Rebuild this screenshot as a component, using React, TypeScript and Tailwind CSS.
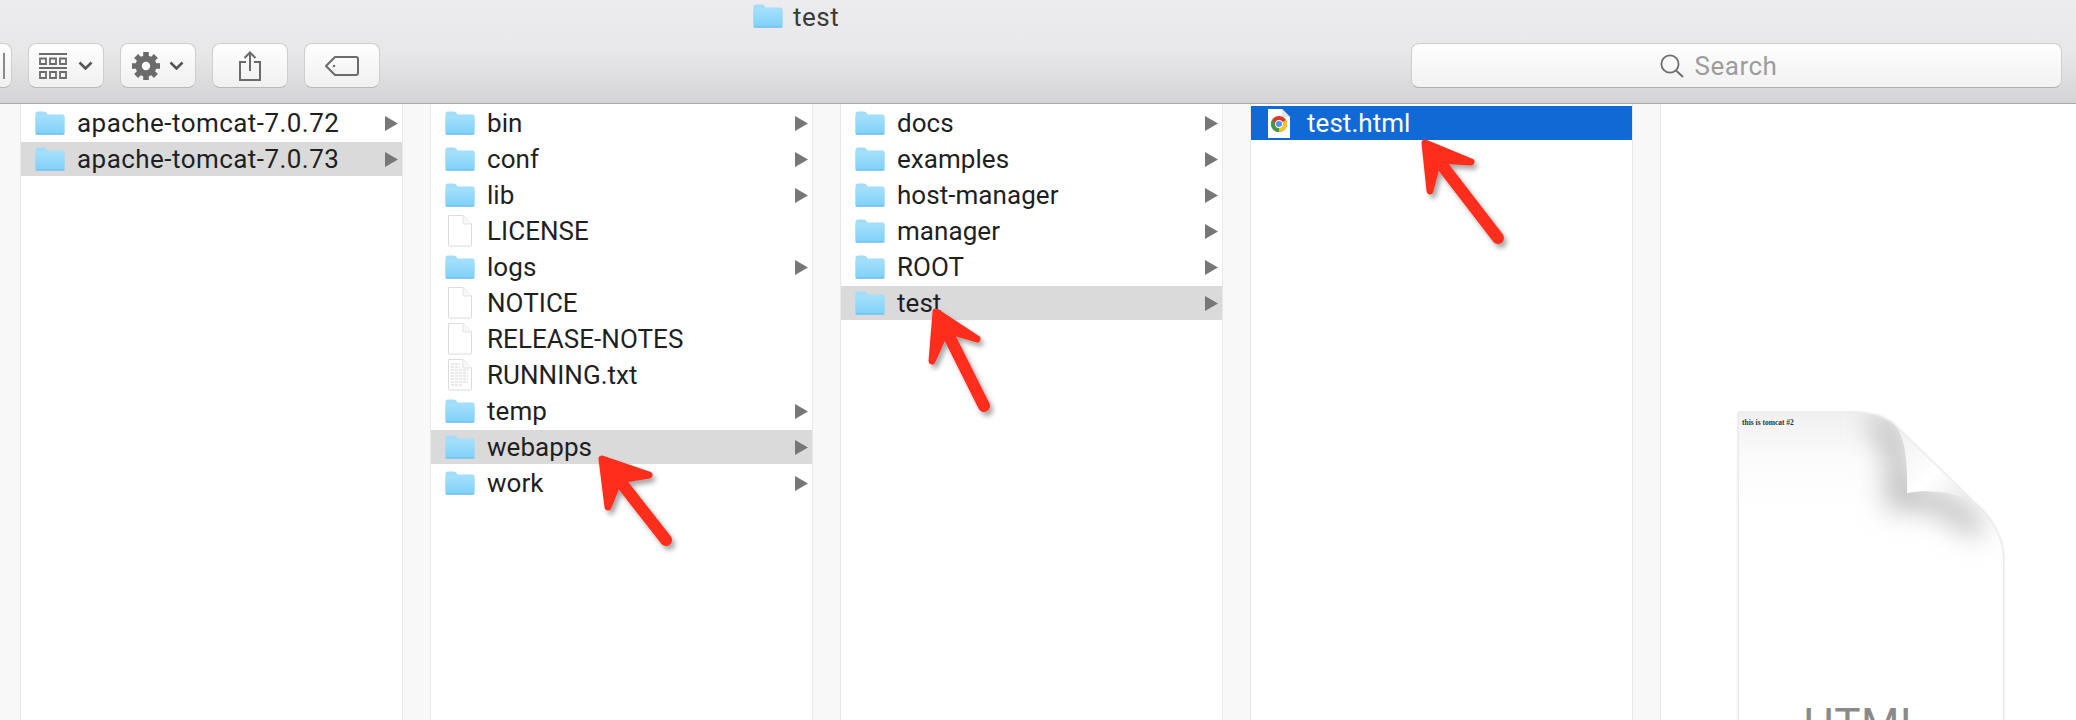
import React from 'react';

type Item = { name: string; kind: 'folder' | 'file' | 'text' | 'chrome'; state?: 'open' | 'active'; wide?: boolean };

const columns: Item[][] = [
  [
    { name: 'apache-tomcat-7.0.72', kind: 'folder', wide: true },
    { name: 'apache-tomcat-7.0.73', kind: 'folder', state: 'open', wide: true },
  ],
  [
    { name: 'bin', kind: 'folder' },
    { name: 'conf', kind: 'folder' },
    { name: 'lib', kind: 'folder' },
    { name: 'LICENSE', kind: 'file' },
    { name: 'logs', kind: 'folder' },
    { name: 'NOTICE', kind: 'file' },
    { name: 'RELEASE-NOTES', kind: 'file' },
    { name: 'RUNNING.txt', kind: 'text' },
    { name: 'temp', kind: 'folder' },
    { name: 'webapps', kind: 'folder', state: 'open' },
    { name: 'work', kind: 'folder' },
  ],
  [
    { name: 'docs', kind: 'folder' },
    { name: 'examples', kind: 'folder' },
    { name: 'host-manager', kind: 'folder' },
    { name: 'manager', kind: 'folder' },
    { name: 'ROOT', kind: 'folder' },
    { name: 'test', kind: 'folder', state: 'open' },
  ],
  [{ name: 'test.html', kind: 'chrome', state: 'active' }],
];

const FolderIcon = () => (
  <svg width="30" height="24" viewBox="0 0 30 24" className="shrink-0">
    <defs>
      <linearGradient id="folderFill" x1="0" y1="0" x2="0" y2="1">
        <stop offset="0" stopColor="#a5e0fb" />
        <stop offset="1" stopColor="#7fd0f9" />
      </linearGradient>
    </defs>
    <path d="M0.5 3 Q0.5 0.5 3 0.5 H9 Q10.5 0.5 11.5 2 L12.5 3.5 H27.5 Q29.5 3.5 29.5 5.5 V21.5 Q29.5 23.5 27.5 23.5 H2.5 Q0.5 23.5 0.5 21.5 Z" fill="#a2dcf9" />
    <path d="M0.5 6 Q0.5 4.5 2.5 4.5 H27.5 Q29.5 4.5 29.5 6 V21.5 Q29.5 23.5 27.5 23.5 H2.5 Q0.5 23.5 0.5 21.5 Z" fill="url(#folderFill)" />
    <path d="M1 23 H29" stroke="#6bb9e4" strokeWidth="1.2" strokeLinecap="round" />
  </svg>
);

const FileIcon = ({ lines }: { lines?: boolean }) => (
  <svg width="30" height="32" viewBox="0 0 30 32" className="shrink-0">
    <path d="M3.5 0.5 H18 L26.5 9 V30 Q26.5 31 25.5 31 H4.5 Q3.5 31 3.5 30 Z" fill="#fff" stroke="#dcdcdc" />
    <path d="M18 0.5 V9 H26.5" fill="#f8f8f8" stroke="#e2e2e2" />
    {lines && (
      <path
        d="M6 5 H15 M6 8 H15 M6 11 H23 M6 14 H23 M6 17 H23 M6 20 H23 M6 23 H23 M6 26 H17"
        stroke="#d4d4d4"
        strokeWidth="1.2"
        strokeDasharray="3 1"
      />
    )}
  </svg>
);

const ChromeDoc = () => (
  <svg width="30" height="30" viewBox="0 0 30 30" className="shrink-0">
    <path d="M3 1 H17 L25 9 V30 H3 Z" fill="#fff" />
    <path d="M17 1 V9 H25" fill="#e4e4e4" />
    <circle cx="14" cy="16" r="8" fill="#d8392c" />
    <path d="M14 16 L7.1 20 A8 8 0 0 0 14 24 Z" fill="#3f9b47" />
    <path d="M14 16 L14 24 A8 8 0 0 0 21 12 Z" fill="#f4c430" />
    <path d="M7.1 20 A8 8 0 0 1 7.4 11.5 L11 17.5 Z" fill="#3f9b47" />
    <circle cx="14" cy="16" r="3.9" fill="#fff" />
    <circle cx="14" cy="16" r="3" fill="#5a8ff0" />
  </svg>
);

const Row = ({ item }: { item: Item }) => {
  const rowColor =
    item.state === 'active' ? 'bg-[#1169d6] text-white' : item.state === 'open' ? 'bg-[#dadada] text-[#1f1f1f]' : 'text-[#1f1f1f]';
  return (
    <div className={`flex h-[34px] items-center pl-[14px] pr-[4px] ${rowColor}`}>
      {item.kind === 'folder' && <FolderIcon />}
      {item.kind === 'file' && <FileIcon />}
      {item.kind === 'text' && <FileIcon lines />}
      {item.kind === 'chrome' && <ChromeDoc />}
      <span className={`ml-[12px] flex-1 text-[26px] leading-[34px] ${item.wide ? 'tracking-[0.45px]' : 'tracking-[0.05px]'}`}>
        {item.name}
      </span>
      {item.kind === 'folder' && (
        <svg width="13" height="15" viewBox="0 0 13 15">
          <path d="M0 0 L13 7.5 L0 15 Z" fill="#777" />
        </svg>
      )}
    </div>
  );
};

const Gutter = ({ className }: { className: string }) => (
  <div className={`shrink-0 border-[#e8e8e8] bg-[#f8f8f8] ${className}`} />
);

const Chevron = () => (
  <svg width="15" height="9" viewBox="0 0 15 9" fill="none">
    <path d="M1.5 1.5 L7.5 7.5 L13.5 1.5" stroke="#555" strokeWidth="2.6" />
  </svg>
);

const ToolButton = ({ children, className = '' }: { children?: React.ReactNode; className?: string }) => (
  <div
    className={`flex h-[45px] w-[76px] shrink-0 items-center justify-center rounded-[8px] border border-[#cfcfcf] border-b-[#b8b8b8] bg-gradient-to-b from-[#fefefe] to-[#f0f0f0] ${className}`}
  >
    {children}
  </div>
);

const ViewIcon = () => (
  <svg width="28" height="26" viewBox="0 0 28 26" fill="none" stroke="#6b6b6b">
    <path d="M0 1 H28 M0 15 H28" strokeWidth="2" />
    <path d="M1 5.5 H7 V11 H1 Z M11 5.5 H17 V11 H11 Z M21 5.5 H27 V11 H21 Z" strokeWidth="1.8" />
    <path d="M1 19 H7 V25 H1 Z M11 19 H17 V25 H11 Z M21 19 H27 V25 H21 Z" strokeWidth="1.8" />
  </svg>
);

const GearIcon = () => (
  <svg width="28" height="28" viewBox="0 0 28 28">
    <g fill="#6b6b6b">
      <circle cx="14" cy="14" r="10.5" />
      {[0, 45, 90, 135, 180, 225, 270, 315].map((a) => (
        <rect key={a} x="11.2" y="0" width="5.6" height="6" transform={`rotate(${a} 14 14)`} />
      ))}
    </g>
    <circle cx="14" cy="14" r="4.2" fill="#f8f8f8" />
  </svg>
);

const ShareIcon = () => (
  <svg width="22" height="30" viewBox="0 0 22 30" fill="none" stroke="#6b6b6b" strokeWidth="2">
    <path d="M7 11 H1 V29 H21 V11 H15" />
    <path d="M11 20 V1.5 M5.5 7 L11 1.5 L16.5 7" />
  </svg>
);

const TagIcon = () => (
  <svg width="34" height="20" viewBox="0 0 34 20" fill="none" stroke="#6b6b6b" strokeWidth="2">
    <path d="M10 1 H31 Q33 1 33 3 V17 Q33 19 31 19 H10 L1 10 Z" strokeLinejoin="round" />
    <circle cx="9" cy="10" r="1.2" fill="#6b6b6b" stroke="none" />
  </svg>
);

const paperPath = 'M0 0 H115 C135 0 150 6 158 15 L235 90 C252 104 264 125 264 147 V320 H0 Z';

const PaperPreview = () => (
  <div className="relative ml-[78px] mt-[309px] h-[320px] w-[264px]">
    <svg width="264" height="320" viewBox="0 0 264 320" className="absolute left-0 top-0 overflow-visible">
      <defs>
        <linearGradient id="paperTop" x1="0" y1="0" x2="0" y2="1">
          <stop offset="0" stopColor="#f0f0f0" />
          <stop offset="0.14" stopColor="#fbfbfb" />
          <stop offset="0.3" stopColor="#ffffff" />
        </linearGradient>
        <linearGradient id="flapFill" x1="0" y1="0" x2="1" y2="1">
          <stop offset="0" stopColor="#f0f0f0" />
          <stop offset="0.55" stopColor="#ffffff" />
          <stop offset="1" stopColor="#e6e6e6" />
        </linearGradient>
        <filter id="paperEdge" x="-5%" y="-5%" width="110%" height="110%">
          <feGaussianBlur stdDeviation="0.8" />
        </filter>
        <filter id="curlBlur" x="-40%" y="-40%" width="180%" height="180%">
          <feGaussianBlur stdDeviation="14" />
        </filter>
        <clipPath id="paperClip">
          <path d={paperPath} />
        </clipPath>
      </defs>
      <path d={paperPath} fill="#fff" stroke="#cdcdcd" strokeWidth="1.5" filter="url(#paperEdge)" />
      <path d={paperPath} fill="url(#paperTop)" />
      <g clipPath="url(#paperClip)">
        <path
          d="M135 5 C160 25 163 55 158 85 C185 82 215 90 240 118"
          fill="none"
          stroke="#b4b4b4"
          strokeWidth="20"
          filter="url(#curlBlur)"
        />
      </g>
      <path d="M158 15 C167 28 169 55 168 80 C190 76 218 79 235 90 Z" fill="url(#flapFill)" />
    </svg>
    <span className="absolute left-[3px] top-[5px] text-[7.5px] font-bold leading-[9px] text-[#333] [font-family:'Liberation_Serif',serif]">
      this is tomcat #2
    </span>
    <span className="absolute left-[64px] top-[287px] text-[44px] leading-[50px] tracking-[0.5px] text-[#8a8a8a]">HTML</span>
  </div>
);

const Arrow = ({ tip, wingA, wingB, mid, tail }: Record<'tip' | 'wingA' | 'wingB' | 'mid' | 'tail', string>) => (
  <g stroke="#ff2d1e" strokeLinecap="round" strokeLinejoin="round" fill="#ff2d1e" filter="url(#arrowShadow)">
    <path d={`M${tip} L${wingA} L${mid} L${wingB} Z`} strokeWidth="7" />
    <path d={`M${mid} L${tail}`} strokeWidth="12" fill="none" />
  </g>
);

export default function App() {
  return (
    <div className="relative flex h-[720px] w-[2076px] flex-col overflow-hidden bg-white [font-family:Roboto,'Liberation_Sans',sans-serif]">
      <header className="h-[104px] shrink-0 border-b border-[#a9a9a9] bg-gradient-to-b from-[#ecebee] via-[#e8e7ea] to-[#d4d3d6]">
        <div className="flex h-[43px] items-start pl-[753px] pt-[4px]">
          <FolderIcon />
          <span className="ml-[10px] text-[26px] leading-[26px] tracking-[0.5px] text-[#3a3a3a]">test</span>
        </div>
        <div className="flex items-center gap-[16px] pr-[14px]">
          <ToolButton className="-ml-[64px] !justify-start pl-[66px]">
            <div className="h-[26px] w-[2px] bg-[#8a8a8a]" />
          </ToolButton>
          <ToolButton className="gap-[11px]">
            <ViewIcon />
            <Chevron />
          </ToolButton>
          <ToolButton className="gap-[9px]">
            <GearIcon />
            <Chevron />
          </ToolButton>
          <ToolButton>
            <ShareIcon />
          </ToolButton>
          <ToolButton>
            <TagIcon />
          </ToolButton>
          <div className="ml-auto flex h-[45px] w-[651px] items-center justify-center gap-[10px] rounded-[8px] border border-[#cfcfcf] border-b-[#b0b0b0] bg-gradient-to-b from-[#fefefe] to-[#f2f2f2] pr-[36px]">
            <svg width="25" height="24" viewBox="0 0 25 24" fill="none" stroke="#6e6e6e" strokeWidth="1.8">
              <circle cx="10" cy="10" r="8.6" />
              <path d="M16 16.5 L23 23" strokeWidth="2" />
            </svg>
            <span className="text-[26px] leading-[30px] tracking-[0.5px] text-[#9c9c9c]">Search</span>
          </div>
        </div>
      </header>

      <main className="flex min-h-0 flex-1">
        <Gutter className="w-[21px] border-r" />
        {columns.map((col, i) => (
          <React.Fragment key={i}>
            <section className="flex w-[381px] shrink-0 flex-col gap-[2px] pt-[2px]">
              {col.map((item) => (
                <Row key={item.name} item={item} />
              ))}
            </section>
            <Gutter className="w-[29px] border-x" />
          </React.Fragment>
        ))}
        <aside className="min-w-0 flex-1 overflow-hidden">
          <PaperPreview />
        </aside>
      </main>

      <svg width="2076" height="720" viewBox="0 0 2076 720" className="pointer-events-none absolute left-0 top-0">
        <defs>
          <filter id="arrowShadow" x="-30%" y="-30%" width="170%" height="170%">
            <feDropShadow dx="3" dy="4" stdDeviation="2.5" floodColor="#000" floodOpacity="0.35" />
          </filter>
        </defs>
        <Arrow tip="602 459" wingA="649 475" wingB="608 507" mid="619 480" tail="666 540" />
        <Arrow tip="936 312" wingA="977 339" wingB="932 361" mid="946 330" tail="984 406" />
        <Arrow tip="1425 143" wingA="1471 162" wingB="1430 191" mid="1438 160" tail="1498 238" />
      </svg>
    </div>
  );
}
